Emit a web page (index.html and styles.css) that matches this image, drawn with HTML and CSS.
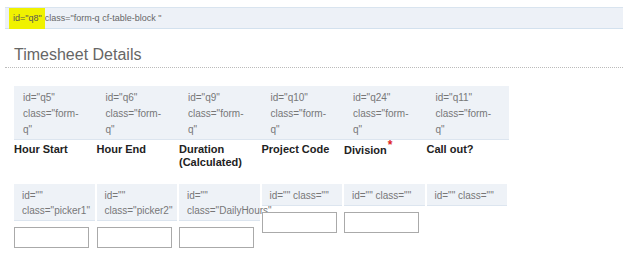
FILE: index.html
```html
<!DOCTYPE html>
<html lang="en">

<head>
  <meta charset="UTF-8">
  <title>Timesheet Details</title>
  <link rel="stylesheet" href="styles.css">
</head>

<body>
  <div class="question">
    <div class="q-tag"><span class="q-id">id="q8"</span><span>class="form-q cf-table-block "</span></div>
    <h2 class="section-title">Timesheet Details</h2>

    <!-- question headers -->
    <div class="cols cols-head">
      <div class="col">
        <div class="tag">id="q5" class="form-q"</div>
        <div class="label">Hour Start</div>
      </div>
      <div class="col">
        <div class="tag">id="q6" class="form-q"</div>
        <div class="label">Hour End</div>
      </div>
      <div class="col">
        <div class="tag">id="q9" class="form-q"</div>
        <div class="label">Duration (Calculated)</div>
      </div>
      <div class="col">
        <div class="tag">id="q10" class="form-q"</div>
        <div class="label">Project Code</div>
      </div>
      <div class="col">
        <div class="tag">id="q24" class="form-q"</div>
        <div class="label label-req">Division<sup class="req">*</sup></div>
      </div>
      <div class="col">
        <div class="tag">id="q11" class="form-q"</div>
        <div class="label">Call out?</div>
      </div>
    </div>

    <!-- first row of inputs -->
    <div class="cols cols-inputs">
      <div class="col">
        <div class="tag">id="" class="picker1"</div>
        <input class="field" type="text">
      </div>
      <div class="col">
        <div class="tag">id="" class="picker2"</div>
        <input class="field" type="text">
      </div>
      <div class="col">
        <div class="tag">id="" class="DailyHours"</div>
        <input class="field" type="text">
      </div>
      <div class="col">
        <div class="tag">id="" class=""</div>
        <input class="field" type="text">
      </div>
      <div class="col">
        <div class="tag">id="" class=""</div>
        <input class="field" type="text">
      </div>
      <div class="col">
        <div class="tag">id="" class=""</div>
      </div>
    </div>
  </div>
</body>

</html>
```

FILE: styles.css
```css
html {
  background: white;
}

body {
  margin: 0;
  font-family: "Liberation Sans", Arial, sans-serif;
}

.question {
  margin: 7px 11px 0 5px;
}

.q-tag {
  display: flex;
  height: 20px;
  line-height: 20px;
  padding-left: 4px;
  background: #edf1f7;
  border-top: 1px solid #d9e4ef;
  border-bottom: 1px solid #d3e1ee;
  font-size: 9px;
  color: #666;
}

.q-id {
  margin-bottom: -1px;
  padding: 0 3px 0 4px;
  background: #f0f200;
  color: #555;
}

.section-title {
  margin: 16px 0 0;
  padding: 0 0 2px 9px;
  line-height: 20px;
  font-size: 16px;
  font-weight: normal;
  color: #666;
  border-bottom: 1px dotted #bbb;
}

.cols {
  display: flex;
  margin-left: 9px;
}

.col {
  width: 82.5px;
  flex: none;
}

.tag {
  padding: 4px 16px 1px 9px;
  line-height: 16px;
  font-size: 10px;
  color: #777;
  background: #eef2f7;
  border-bottom: 1px solid #dce5ef;
}

.cols-head {
  margin-top: 18px;
}

.label {
  padding-top: 3px;
  line-height: 13px;
  font-size: 11px;
  font-weight: bold;
  color: #222;
}

.label-req {
  padding-top: 4px;
}

.req {
  color: #d22;
  font-size: 12px;
  line-height: 0;
  margin-left: 1px;
}

.cols-inputs {
  margin-top: 15px;
  align-items: flex-start;
}

.cols-inputs .tag {
  margin-right: 2px;
  padding: 4px 8px 2px;
  line-height: 15px;
}

.field {
  display: block;
  box-sizing: border-box;
  width: 75px;
  height: 21px;
  margin: 6px 0 0;
  padding: 0 3px;
  border: 1px solid #aaa;
  background: white;
}
```
